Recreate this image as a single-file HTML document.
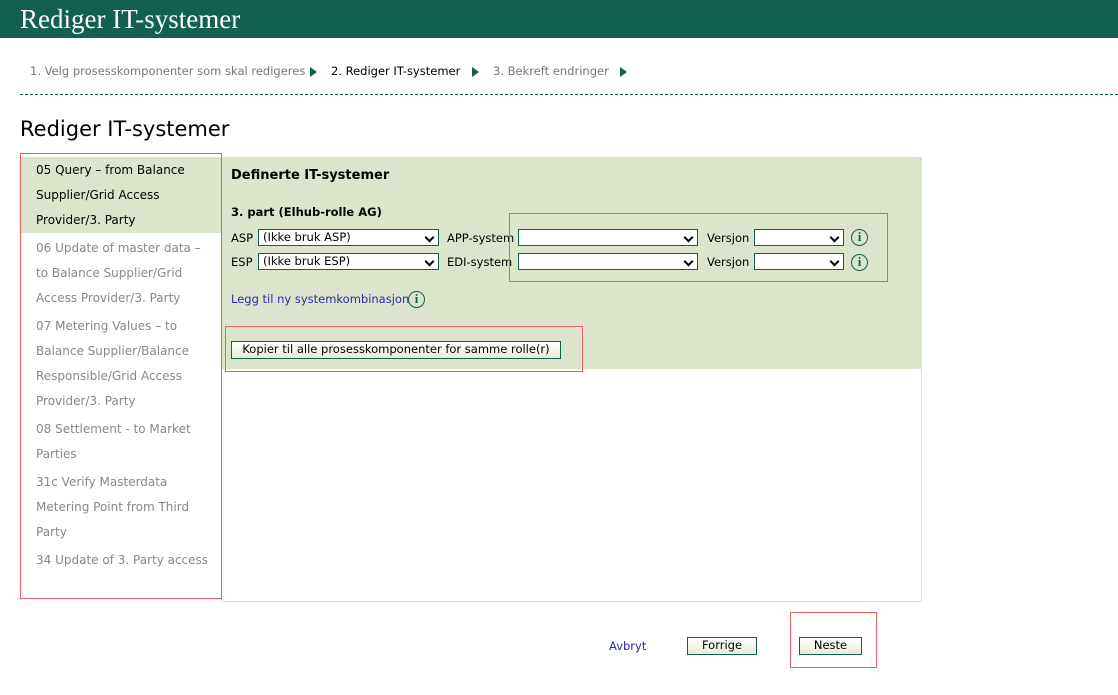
<!DOCTYPE html>
<html><head><style>
*{margin:0;padding:0;box-sizing:border-box}
body{width:1118px;height:695px;background:#fff;font-family:"DejaVu Sans","Liberation Sans",sans-serif;position:relative;overflow:hidden}
.a{position:absolute;white-space:nowrap}
#hdr{left:0;top:0;width:1118px;height:38px;background:#135f50;color:#fff;font-family:"Liberation Serif",serif;font-size:27px;padding:4px 0 0 20px}
.crumb{font-size:11.5px;top:64px;color:#777}
.arr{width:0;height:0;border-left:7px solid #135f50;border-top:5px solid transparent;border-bottom:5px solid transparent;top:67px}
.side{font-size:12px;color:#888;left:36px;line-height:25px;white-space:normal;width:178px}
.sel{border:1px solid #135f50;background:#fff;height:17px;font-size:11.5px;padding-left:4px;line-height:15px}
.sel:after{content:"";position:absolute;right:5px;top:4px;width:5px;height:5px;border-right:2px solid #000;border-bottom:2px solid #000;transform:rotate(45deg)}
.lbl{font-size:11.5px;color:#000}
.info{width:17px;height:17px;border:1.5px solid #135f50;border-radius:50%;color:#135f50;font-family:"Liberation Serif",serif;font-weight:bold;font-size:13px;text-align:center;line-height:14px}
.btn{border:1px solid #135f50;background:linear-gradient(#fff,#e8ecd8);font-size:11.5px;text-align:center;line-height:15px}
.red{border:1px solid #e86060}
</style></head><body>
<div class="a" id="hdr">Rediger IT-systemer</div>
<div class="a crumb" style="left:30px">1. Velg prosesskomponenter som skal redigeres</div>
<div class="a arr" style="left:310px"></div>
<div class="a crumb" style="left:331px;color:#000">2. Rediger IT-systemer</div>
<div class="a arr" style="left:472px"></div>
<div class="a crumb" style="left:493px">3. Bekreft endringer</div>
<div class="a arr" style="left:620px"></div>
<div class="a" style="left:20px;top:94px;width:1098px;border-top:1px dashed #135f50"></div>
<div class="a" style="left:20px;top:117px;font-size:21px;color:#000">Rediger IT-systemer</div>

<div class="a" style="left:221px;top:157px;width:701px;height:445px;border:1px solid #ddd;background:#fff"></div>
<div class="a" style="left:221px;top:157px;width:701px;height:212px;background:#dce5cc"></div>
<div class="a" style="left:21px;top:157px;width:200px;height:76px;background:#dce5cc"></div>
<div class="a side" style="top:158px;color:#000">05 Query – from Balance Supplier/Grid Access Provider/3. Party</div>
<div class="a side" style="top:236px">06 Update of master data – to Balance Supplier/Grid Access Provider/3. Party</div>
<div class="a side" style="top:314px">07 Metering Values – to Balance Supplier/Balance Responsible/Grid Access Provider/3. Party</div>
<div class="a side" style="top:417px">08 Settlement - to Market Parties</div>
<div class="a side" style="top:470px">31c Verify Masterdata Metering Point from Third Party</div>
<div class="a side" style="top:548px">34 Update of 3. Party access</div>
<div class="a red" style="left:20px;top:153px;width:202px;height:446px"></div>

<div class="a" style="left:231px;top:168px;font-size:13px;font-weight:bold">Definerte IT-systemer</div>
<div class="a" style="left:231px;top:205px;font-size:11.5px;font-weight:bold">3. part (Elhub-rolle AG)</div>
<div class="a lbl" style="left:231px;top:231px">ASP</div>
<div class="a sel" style="left:258px;top:229px;width:181px">(Ikke bruk ASP)</div>
<div class="a lbl" style="left:447px;top:231px">APP-system</div>
<div class="a sel" style="left:518px;top:229px;width:180px"></div>
<div class="a lbl" style="left:707px;top:231px">Versjon</div>
<div class="a sel" style="left:754px;top:229px;width:90px"></div>
<div class="a info" style="left:851px;top:229px">i</div>
<div class="a lbl" style="left:231px;top:255px">ESP</div>
<div class="a sel" style="left:258px;top:253px;width:181px">(Ikke bruk ESP)</div>
<div class="a lbl" style="left:447px;top:255px">EDI-system</div>
<div class="a sel" style="left:518px;top:253px;width:180px"></div>
<div class="a lbl" style="left:707px;top:255px">Versjon</div>
<div class="a sel" style="left:754px;top:253px;width:90px"></div>
<div class="a info" style="left:851px;top:254px">i</div>
<div class="a red" style="left:509px;top:213px;width:379px;height:69px"></div>
<div class="a lbl" style="left:231px;top:292px;color:#2a2aa8">Legg til ny systemkombinasjon</div>
<div class="a info" style="left:408px;top:291px">i</div>
<div class="a btn" style="left:231px;top:341px;width:330px;height:18px">Kopier til alle prosesskomponenter for samme rolle(r)</div>
<div class="a red" style="left:225px;top:326px;width:358px;height:46px"></div>

<div class="a lbl" style="left:609px;top:639px;color:#2a2aa8">Avbryt</div>
<div class="a btn" style="left:687px;top:637px;width:70px;height:18px">Forrige</div>
<div class="a btn" style="left:799px;top:637px;width:63px;height:18px">Neste</div>
<div class="a red" style="left:790px;top:612px;width:87px;height:56px"></div>
</body></html>
